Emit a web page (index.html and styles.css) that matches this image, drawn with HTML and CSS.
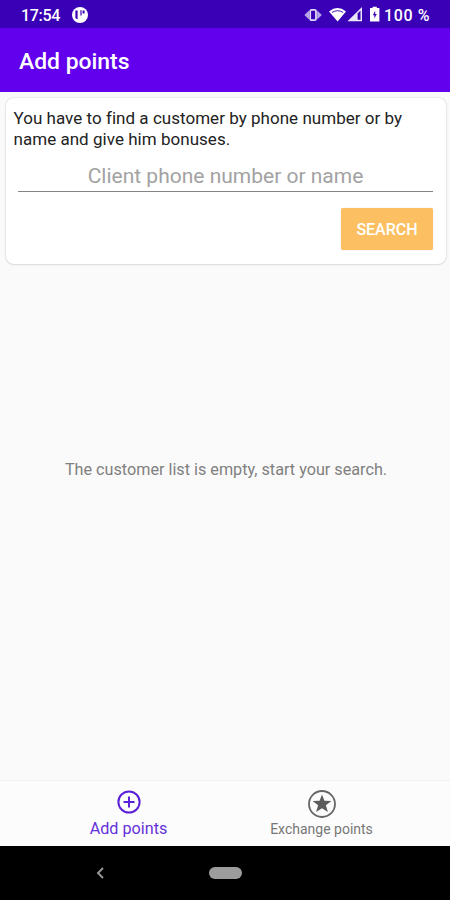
FILE: index.html
```html
<!DOCTYPE html>
<html lang="en">
<head>
<meta charset="utf-8">
<title>Add points</title>
<link rel="stylesheet" href="styles.css">
</head>
<body>
<div class="screen">
  <div class="status">
    <span class="time">17:54</span>
    <svg class="app-icon" width="16" height="16" viewBox="0 0 16 16"><circle cx="8" cy="8" r="8" fill="#fff"/><path d="M3.400 3.600h2.200v8.600l-2.200-1zM8.400 3.200h1.200v5.400H8.400zM10.600 3.600h2v3h-2z" fill="#3a00b5"/></svg>
    <svg class="system" width="78" height="18" viewBox="0 0 78 18">
      <path d="M.4 9L5 4.400v9.200zM17.800 9l-4.600-4.600v9.200z" fill="#b7a6ea"/><rect x="6.200" y="3.800" width="5.800" height="10.400" rx="1.400" fill="#3a00b5" stroke="#e0d8f8" stroke-width="1.800"/>
      <path d="M25 5.400Q33.500-1.400 42 5.400L33.600 15.400z" fill="#fff"/><path d="M28 6.400q5.600-3.400 11.200 0" fill="none" stroke="#4410b9" stroke-width="1"/>
      <path d="M43.500 15.300L58 1v14.300z" fill="#ece6fb"/><path d="M53.600 7.500L56.500 4.600V13.800H53.600z" fill="#3a00b5"/>
      <path d="M66 2h2.600V.8h4.200V2h2.600v13.600H66z" fill="#fff"/><path d="M71.200 4.800L68.800 9.200h1.600v3.200l2.400-4.400h-1.600z" fill="#3a00b5"/>
    </svg>
    <span class="percent">100 %</span>
  </div>
  <header class="bar"><h1>Add points</h1></header>
  <main>
    <section class="card">
      <p class="hint">You have to find a customer by phone number or by<br>name and give him bonuses.</p>
      <input class="field" type="text" placeholder="Client phone number or name">
      <button class="search" type="button">SEARCH</button>
    </section>
    <div class="empty"><span>The customer list is empty, start your search.</span></div>
  </main>
  <nav class="tabs">
    <a class="tab active">
      <svg width="24" height="24" viewBox="0 0 24 24" fill="none" stroke="#5a1fd8" stroke-width="2"><circle cx="12" cy="12" r="10.600"/><path d="M12 6.500v11M6.500 12h11"/></svg>
      <span>Add points</span>
    </a>
    <a class="tab exchange">
      <svg width="28" height="28" viewBox="0 0 28 28"><circle cx="14" cy="14" r="13" fill="none" stroke="#666" stroke-width="1.800"/><path d="M14 4.400l2.400 6.400 7 .2-5.500 4.200 2 6.800L14 18.200 8.100 22l2-6.800L4.600 11l7-.2z" fill="#5c5c5c"/></svg>
      <span>Exchange points</span>
    </a>
  </nav>
  <div class="system-nav">
    <svg width="8" height="12" viewBox="0 0 8 12"><path d="M7 1L2 6l5 5" fill="none" stroke="#999" stroke-width="1.900"/></svg>
    <span class="home"></span>
  </div>
</div>
</body>
</html>
```
FILE: styles.css
```css
* { box-sizing: border-box; }
body { margin: 0; font-family: Roboto, sans-serif; background: #fafafa; }
.screen { width: 450px; height: 900px; display: flex; flex-direction: column; overflow: hidden; }
.status { height: 28px; flex: none; background: #3a00b5; color: #fff; display: flex; align-items: center; padding: 2px 20px 0 21px; font-size: 16px; font-weight: 500; white-space: nowrap; }
.time { width: 39px; letter-spacing: -.3px; }
.app-icon { margin-left: 12px; }
.system { margin-left: auto; }
.percent { width: 46px; margin-left: 2px; letter-spacing: .6px; }
.bar { height: 64px; flex: none; background: #6200ee; color: #fff; display: flex; align-items: center; padding: 3px 19px 0; }
h1 { margin: 0; font-size: 22.900px; font-weight: 500; line-height: 28px; }
main { flex: 1; display: flex; flex-direction: column; padding: 6px 4px 0 6px; background: #fafafa; }
.card { height: 166px; flex: none; display: flex; flex-direction: column; background: #fff; border-radius: 8px; box-shadow: 0 0 2px rgba(0,0,0,.2), 0 1px 2px rgba(0,0,0,.08); padding: 10px 13px 0 7.500px; }
.hint { margin: 0; font-size: 17px; letter-spacing: .03px; line-height: 20.500px; color: #222; white-space: nowrap; }
.field { height: 33px; margin: 10px 0 0 4.500px; padding: 1px 0 0; border: 0; border-bottom: 1px solid #858585; background: none; font: 21px/30px Roboto, sans-serif; text-align: center; outline: none; }
.field::placeholder { color: #a2a2a2; opacity: 1; }
.search { align-self: flex-end; width: 92px; height: 42px; margin-top: 16px; padding: 0; border: 0; border-radius: 2px; background: #fcc063; color: #fff; font: 500 16px Roboto, sans-serif; box-shadow: 0 0 1px rgba(160,100,20,.4); }
.empty { flex: 1; display: flex; justify-content: center; padding-top: 195px; font-size: 16.200px; line-height: 22px; color: #808080; }
.tabs { height: 66px; flex: none; border-top: 1px solid #f0f0f0; background: #fcfcfc; display: flex; padding: 0 32px; }
.tab { flex: 1; display: flex; flex-direction: column; align-items: center; padding-top: 9px; font-size: 16.200px; line-height: 18px; color: #6531da; }
.tab span { margin-top: 6px; white-space: nowrap; }
.exchange { color: #777; font-size: 14px; }
.exchange span { margin-top: 2px; }
.system-nav { height: 54px; flex: none; background: #000; display: flex; align-items: center; padding-left: 96px; }
.home { width: 33px; height: 12px; margin-left: 105px; border-radius: 6px; background: #9d9d9d; }
```
